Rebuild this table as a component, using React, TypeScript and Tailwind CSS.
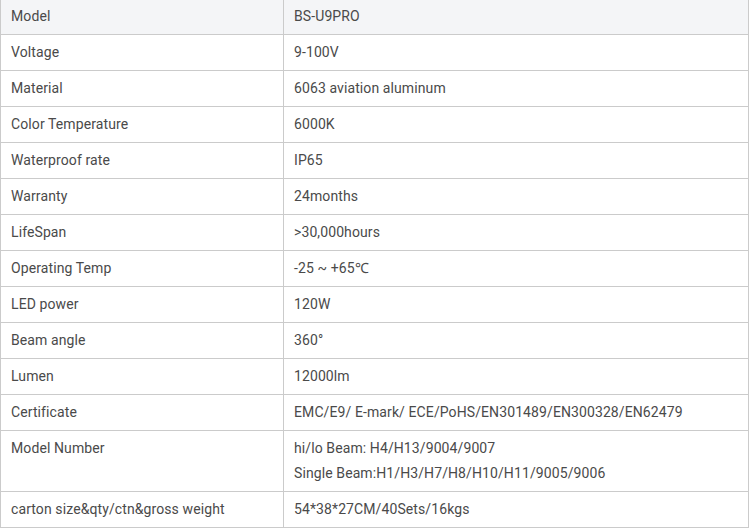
const rows: [string, string[]][] = [
  ['Model', ['BS-U9PRO']],
  ['Voltage', ['9-100V']],
  ['Material', ['6063 aviation aluminum']],
  ['Color Temperature', ['6000K']],
  ['Waterproof rate', ['IP65']],
  ['Warranty', ['24months']],
  ['LifeSpan', ['>30,000hours']],
  ['Operating Temp', ['-25 ~ +65℃']],
  ['LED power', ['120W']],
  ['Beam angle', ['360°']],
  ['Lumen', ['12000lm']],
  ['Certificate', ['EMC/E9/ E-mark/ ECE/PoHS/EN301489/EN300328/EN62479']],
  ['Model Number', ['hi/lo Beam: H4/H13/9004/9007', 'Single Beam:H1/H3/H7/H8/H10/H11/9005/9006']],
  ['carton size&qty/ctn&gross weight', ['54*38*27CM/40Sets/16kgs']],
]

export default function App() {
  return (
    <div className="w-[751px] h-[529px] overflow-hidden bg-white">
      <table
        className="-mt-[2px] w-[749px] border-collapse text-[14px] leading-[25px] tracking-[0.1px] text-[#4a4a4a]"
        style={{ fontFamily: 'Roboto, "Liberation Sans", sans-serif' }}
      >
        <tbody>
          {rows.map(([label, values], i) => (
            <tr key={label} className={i === 0 ? 'bg-[#f4f5f7]' : 'bg-white'}>
              <td className="w-[283px] border border-[#cbcbcb] px-[10px] py-[5px] align-top">{label}</td>
              <td className="border border-[#cbcbcb] px-[10px] py-[5px] align-top">
                {values.map(v => (
                  <div key={v}>{v}</div>
                ))}
              </td>
            </tr>
          ))}
        </tbody>
      </table>
    </div>
  )
}
